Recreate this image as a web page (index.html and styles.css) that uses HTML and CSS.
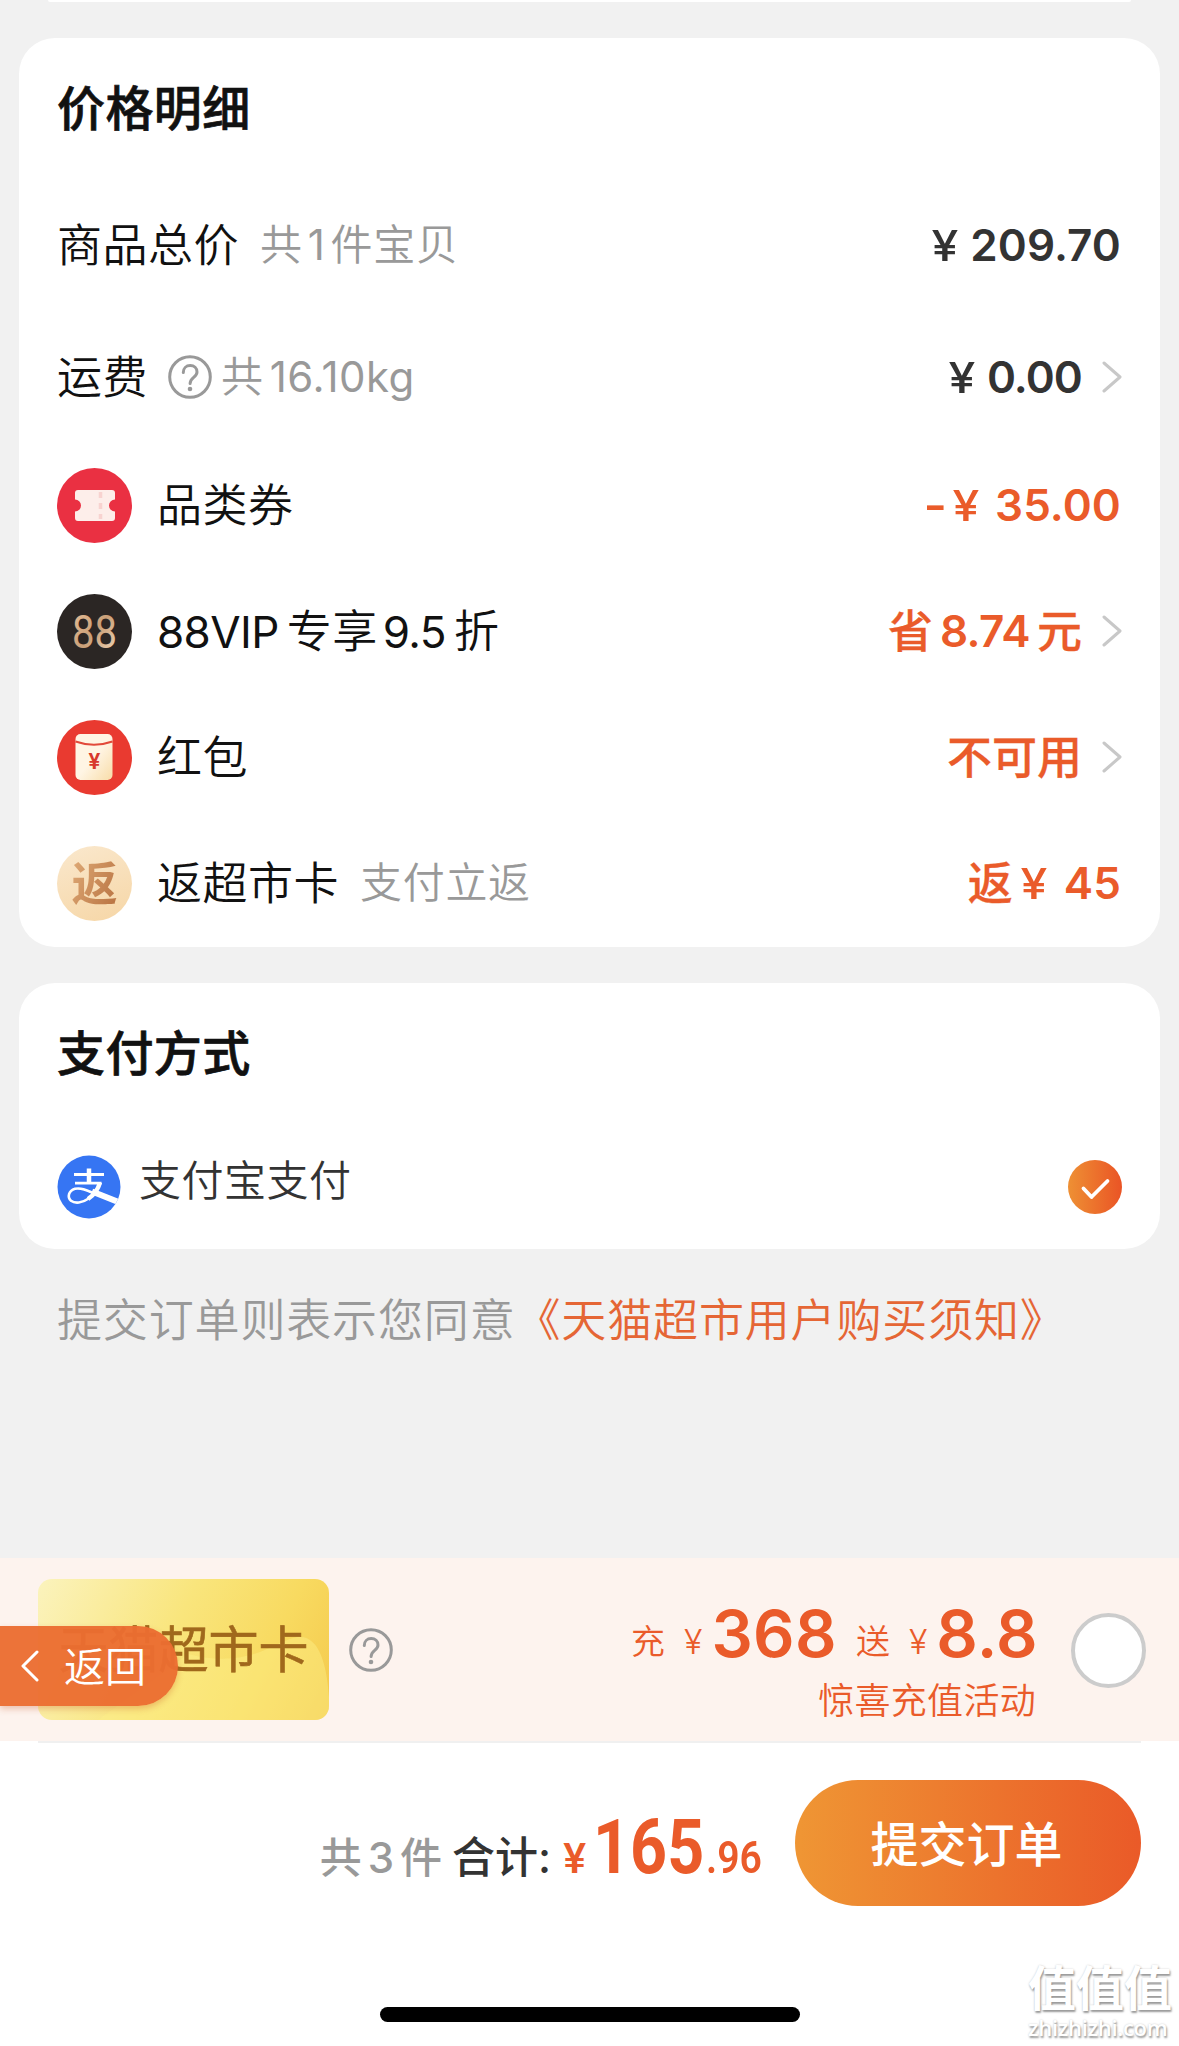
FILE: index.html
```html
<!DOCTYPE html>
<html lang="zh-CN">
<head>
<meta charset="utf-8">
<title>确认订单</title>
<link rel="stylesheet" href="styles.css">
</head>
<body>
<div class="page">
  <main class="content">
    <div class="card-tail"></div>

    <section class="card">
      <h2 class="card-title">价格明细</h2>
      <div class="row row-total">
        <span class="label">商品总价</span><span class="note note-total">共<i class="n">1</i>件宝贝</span>
        <span class="price"><span class="yen">¥</span><span class="num">209.70</span></span>
      </div>
      <div class="row row-freight">
        <span class="label">运费</span>
        <svg class="help help-freight" viewBox="0 0 44 44"><circle cx="22" cy="22" r="20.3"/><path d="M15.3 17.4c0-4 2.9-6.9 6.9-6.9s6.8 2.8 6.8 6.5c0 5.600-6.900 5.400-6.900 11.600"/><circle class="dot" cx="22" cy="34" r="2.300"/></svg>
        <span class="note">共<i class="n n-kg">16.10kg</i></span>
        <span class="price"><span class="yen">¥</span><span class="num num-zero">0.00</span></span>
        <svg class="arrow" viewBox="0 0 20 32"><path d="M2 2l16 14L2 30"/></svg>
      </div>
      <div class="row">
        <svg class="badge" viewBox="0 0 75 75">
          <circle cx="37.500" cy="37.500" r="37.500" fill="#ea3042"/>
          <path d="M21 22h34a3 3 0 0 1 3 3v6.500a6 6 0 0 0 0 12V50a3 3 0 0 1-3 3H21a3 3 0 0 1-3-3v-6.500a6 6 0 0 0 0-12V25a3 3 0 0 1 3-3z" fill="#fdeeea"/>
          <path d="M43.500 24v27" stroke="#f8d3d0" stroke-width="3.500" stroke-dasharray="6 5"/>
        </svg>
        <span class="label">品类券</span>
        <span class="price hot"><span class="minus">-</span><span class="yen yen-coupon">¥</span><span class="num">35.00</span></span>
      </div>
      <div class="row">
        <svg class="badge" viewBox="0 0 75 75">
          <defs><linearGradient id="gold" x1="0" y1="0" x2="1" y2="1"><stop offset="0" stop-color="#e9c19a"/><stop offset=".5" stop-color="#c99f78"/><stop offset="1" stop-color="#f3dcc0"/></linearGradient></defs>
          <circle cx="37.500" cy="37.500" r="37.500" fill="#2b2624"/>
          <text class="vip" x="37.500" y="54" text-anchor="middle" textLength="45" lengthAdjust="spacingAndGlyphs" fill="url(#gold)">88</text>
        </svg>
        <span class="label"><i class="n">88VIP</i><span class="mid">专享</span><i class="n">9.5</i><span class="mid">折</span></span>
        <span class="price hot"><span class="cn">省</span><span class="num num-save">8.74</span><span class="cn">元</span></span>
        <svg class="arrow" viewBox="0 0 20 32"><path d="M2 2l16 14L2 30"/></svg>
      </div>
      <div class="row">
        <svg class="badge" viewBox="0 0 75 75">
          <defs><linearGradient id="env" x1="0" y1="0" x2="1" y2="1"><stop offset=".5" stop-color="#fff5e4"/><stop offset="1" stop-color="#f8dca8"/></linearGradient></defs>
          <circle cx="37.500" cy="37.500" r="37.500" fill="#e93a30"/>
          <rect x="18.500" y="14" width="37" height="46" rx="5" fill="url(#env)"/>
          <path d="M18.500 21.500Q37 28 55.500 21.500" fill="none" stroke="#e24a3a" stroke-width="2"/>
          <text class="env-yen" x="37.300" y="49" text-anchor="middle">¥</text>
        </svg>
        <span class="label">红包</span>
        <span class="price hot"><span class="cn">不可用</span></span>
        <svg class="arrow" viewBox="0 0 20 32"><path d="M2 2l16 14L2 30"/></svg>
      </div>
      <div class="row">
        <span class="badge badge-back"><b>返</b></span>
        <span class="label">返超市卡</span><span class="note note-back">支付立返</span>
        <span class="price hot"><span class="cn">返</span><span class="yen yen-back">¥</span><span class="num">45</span></span>
      </div>
    </section>

    <section class="card card-pay">
      <h2 class="card-title">支付方式</h2>
      <div class="row row-pay">
        <svg class="alipay" viewBox="0 0 64 64">
          <defs><clipPath id="disc"><circle cx="32" cy="32" r="31.500"/></clipPath></defs>
          <circle cx="32" cy="32" r="31.500" fill="#3675f3"/>
          <g clip-path="url(#disc)" fill="none" stroke="#fff">
            <path d="M17 19.500h30" stroke-width="2.800"/>
            <path d="M32 13.500V28" stroke-width="4.500"/>
            <path d="M18 28.200h26.500" stroke-width="2.800"/>
            <path d="M43 27.500c-2 7-6 12.500-12 16.500" stroke-width="4.500"/>
            <path d="M32 43.300c-7 5-14 5.500-18 2.500-4-3.500-2.500-10 4-12 7-1.500 13 2 20 5" stroke-width="2.600"/>
            <path d="M35 36.500l30 12" stroke-width="6"/>
          </g>
        </svg>
        <span class="pay-name">支付宝支付</span>
        <svg class="check" viewBox="0 0 54 54">
          <defs><linearGradient id="ck"><stop offset="0" stop-color="#ee9034"/><stop offset="1" stop-color="#ea5425"/></linearGradient></defs>
          <circle cx="27" cy="27" r="27" fill="url(#ck)"/>
          <path d="M15.500 28.500l8 8.500L39.500 21" fill="none" stroke="#fff" stroke-width="3.800" stroke-linecap="round" stroke-linejoin="round"/>
        </svg>
      </div>
    </section>

    <p class="agree">提交订单则表示您同意<a>《天猫超市用户购买须知》</a></p>
  </main>

  <section class="promo">
    <div class="gift-card">
      <svg class="wave" viewBox="0 0 291 141" preserveAspectRatio="none"><path d="M150 75C215 92 240 58 262 58c20 0 27 30 29 60v23H60z"/></svg>
      <span class="gift-name">天猫超市卡</span>
    </div>
    <svg class="help" viewBox="0 0 44 44"><circle cx="22" cy="22" r="20.300"/><path d="M15.300 17.400c0-4 2.900-6.900 6.900-6.900s6.800 2.800 6.800 6.500c0 5.600-6.900 5.400-6.900 11.600"/><circle class="dot" cx="22" cy="34" r="2.300"/></svg>
    <div class="offer">
      <div class="offer-main"><span class="small">充</span><span class="small-yen">¥</span><span class="big">368</span><span class="small small-send">送</span><span class="small-yen">¥</span><span class="big">8.8</span></div>
      <div class="offer-sub">惊喜充值活动</div>
    </div>
    <span class="radio"></span>
    <div class="back">
      <svg class="back-arrow" viewBox="0 0 20 32"><path d="M17 2L3 16l14 14"/></svg>
      <span class="back-text">返回</span>
    </div>
  </section>

  <footer class="bar">
    <div class="summary">
      <span class="count">共<i class="n">3</i>件</span><span class="total-label">合计:</span><span class="total-yen">¥</span><span class="total-int">165</span><span class="total-dec">.96</span>
    </div>
    <button class="submit">提交订单</button>
  </footer>
  <div class="home"></div>
  <div class="mark"><div class="mark-cn">值值值</div><div class="mark-en">zhizhizhi.com</div></div>
</div>
</body>
</html>
```
FILE: styles.css
```css
* { box-sizing: border-box; margin: 0; padding: 0; }
body { background: #f1f1f1; font-family: Inter, "Noto Sans CJK SC", sans-serif; color: #111; }
i { font-style: normal; }
.page { position: relative; display: flex; flex-direction: column; width: 1179px; height: 2046px; overflow: hidden; background: linear-gradient(#f1f1f1 1600px, #fff 1600px); }
.content { height: 1558px; padding: 0 19px; }
.card-tail { height: 2px; margin: 0 29px 36px; background: #fff; border-radius: 0 0 20px 20px; }
.card { background: #fff; border-radius: 36px; padding: 0 38px 1px; }
.card-pay { margin-top: 36px; }
.card-title { height: 140px; line-height: 142px; font-size: 48px; font-weight: 500; letter-spacing: .4px; -webkit-text-stroke: .7px; }
.row { display: flex; align-items: center; height: 126px; line-height: 60px; white-space: nowrap; }
.row-total { height: 134px; }
.row-freight { height: 130px; }
.label { padding-top: 2px; font-size: 45px; font-weight: 350; letter-spacing: .5px; }
.label .n { font-size: 44px; font-weight: 400; letter-spacing: -.6px; }
.label .mid { margin: 0 5px 0 8px; }
.badge { flex: none; width: 75px; height: 75px; margin-right: 25px; }
.vip { font: 400 46px Roboto, sans-serif; }
.env-yen { font: 600 22px Roboto, sans-serif; fill: #d8392c; }
.badge-back { display: flex; align-items: center; justify-content: center; border-radius: 50%; background: linear-gradient(160deg, #fae8cd, #f6d6a6); }
.badge-back b { font-size: 46px; font-weight: 700; background: linear-gradient(115deg, #e0ac78, #b66f3e); -webkit-background-clip: text; background-clip: text; color: transparent; }
.note { color: #999; font-size: 42px; font-weight: 350; letter-spacing: .7px; }
.note .n { margin: 0 5px; font-weight: 400; }
.note .n-kg { margin-left: 6px; letter-spacing: .5px; }
.note-total { margin-left: 21px; }
.note-back { margin-left: 21px; }
.help { flex: none; width: 44px; height: 44px; fill: none; stroke: #999; stroke-width: 3; stroke-linecap: round; }
.help .dot { fill: #999; stroke: none; }
.help-freight { margin: 0 9px 0 20px; }
.price { display: flex; align-items: center; margin-left: auto; padding-right: 1px; color: #333; font-size: 44px; font-weight: 600; }
.hot { color: #ea5b2a; }
.yen { margin-right: 13px; font-size: 43px; font-weight: 500; transform: scaleX(1.12); }
.num { letter-spacing: .1px; }
.num-zero { letter-spacing: -.9px; }
.minus { margin-right: 9px; transform: scaleX(1.15); }
.yen-coupon { margin-right: 17px; }
.cn { padding-top: 2px; font-size: 45px; font-weight: 500; -webkit-text-stroke: .3px; }
.num-save { margin: 0 7px; letter-spacing: -.6px; }
.yen-back { margin: 0 18px 0 9px; }
.arrow { flex: none; width: 20px; height: 32px; margin-left: 19px; fill: none; stroke: #c8c8c8; stroke-width: 3; stroke-linecap: round; stroke-linejoin: round; }
.row-pay { height: 125px; padding-top: 2px; }
.alipay { flex: none; width: 64px; height: 64px; }
.pay-name { margin: -11px 0 0 18px; color: #333; font-size: 42px; font-weight: 350; letter-spacing: .5px; }
.check { width: 54px; height: 54px; margin-left: auto; }
.agree { margin: 42px 0 0 38px; line-height: 60px; color: #999; font-size: 45px; letter-spacing: .85px; font-weight: 350; white-space: nowrap; }
.agree a { color: #e56635; }
.promo { position: relative; display: flex; align-items: center; height: 185px; padding: 0 33px 0 38px; background: #fdf3ee; }
.promo::after { content: ""; position: absolute; left: 0; right: 0; bottom: 0; height: 2px; background: linear-gradient(90deg, #fff 38px, #f0f0f0 38px, #f0f0f0 1141px, #fff 1141px); }
.gift-card { position: relative; display: flex; align-items: center; justify-content: center; width: 291px; height: 141px; margin: -2px 20px 0 0; border-radius: 14px; overflow: hidden; background: linear-gradient(115deg, #fbf3bd 0%, #f9e57c 45%, #f8da60 75%, #f4c94c 100%); }
.wave { position: absolute; inset: 0; width: 100%; height: 100%; fill: #fcf08a; opacity: .45; }
.gift-name { position: relative; color: #a0681c; font-size: 50px; line-height: 60px; -webkit-text-stroke: .6px; }
.promo > .help { margin-top: -2px; }
.offer { margin-left: auto; padding-top: 22px; color: #ea5b2a; text-align: right; }
.offer-main { display: flex; align-items: baseline; justify-content: flex-end; height: 78px; margin-right: -2px; line-height: 72px; }
.small { position: relative; top: -3px; font-size: 34px; font-weight: 350; }
.small-send { margin-left: 19px; }
.small-yen { position: relative; top: -3px; margin: 0 9px 0 19px; font-size: 34px; font-weight: 300; }
.big { font-size: 65px; font-weight: 600; letter-spacing: .3px; }
.offer-sub { line-height: 50px; font-size: 36px; font-weight: 350; letter-spacing: .3px; }
.radio { width: 75px; height: 75px; margin-left: 35px; border: 4px solid #ccc; border-radius: 50%; background: #fff; }
.back { position: absolute; left: 0; top: 68px; display: flex; align-items: center; width: 178px; height: 80px; padding-left: 20px; border-radius: 0 40px 40px 0; background: rgba(235, 109, 49, .96); box-shadow: 0 3px 6px rgba(200, 80, 30, .3); color: #fff; font-size: 41px; font-weight: 350; }
.back-text { padding-bottom: 4px; }
.back-arrow { width: 20px; height: 32px; margin-right: 24px; fill: none; stroke: #fff; stroke-width: 3; stroke-linecap: round; stroke-linejoin: round; }
.bar { display: flex; align-items: flex-start; justify-content: flex-end; height: 264px; padding: 37px 38px 0 0; background: #fff; }
.summary { display: flex; align-items: baseline; margin-right: 32px; padding-top: 14px; line-height: 126px; white-space: nowrap; }
.count { color: #999; font-size: 42px; font-weight: 500; }
.count .n { margin: 0 6px; }
.total-label { margin-left: 10px; color: #333; font-size: 43px; font-weight: 500; }
.total-yen { margin-left: 12px; color: #ea5b2a; font: 500 43px Roboto, sans-serif; }
.total-int { width: 110px; margin-left: 7px; transform: scaleX(.85); transform-origin: left; color: #ea5b2a; font: 700 76px Roboto, sans-serif; }
.total-dec { width: 57px; margin-left: 3px; transform: scaleX(.89); transform-origin: left; color: #ea5b2a; font: 600 44px Roboto, sans-serif; }
.submit { width: 346px; height: 126px; padding: 0 3px 5px 0; border: 0; border-radius: 63px; background: linear-gradient(90deg, #ef9634, #ea5a28); color: #fff; font: 500 48px "Noto Sans CJK SC", sans-serif; }
.home { flex: none; width: 420px; height: 15px; margin: 0 auto; border-radius: 8px; background: #000; }
.mark { position: absolute; left: 1028px; bottom: 3px; width: 150px; color: #fff; text-shadow: 1px 2px 2px #999, 0 0 2px #ccc; }
.mark-cn { font-size: 48px; font-weight: 700; line-height: 52px; }
.mark-en { padding-bottom: 4px; font: 600 22px/24px "Open Sans", sans-serif; letter-spacing: -.3px; }
```
